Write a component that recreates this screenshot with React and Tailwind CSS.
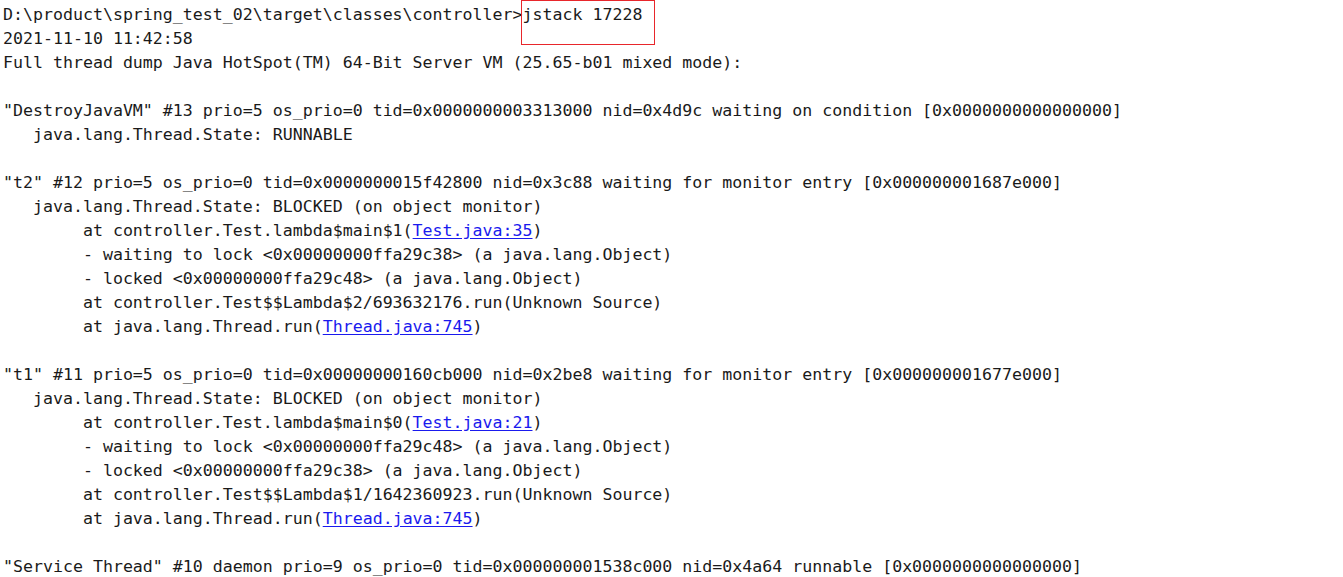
import React from "react";

const L = ({ children }) => <span className="text-[#1a1aee] underline underline-offset-2">{children}</span>;

const lines = [
  ["D:\\product\\spring_test_02\\target\\classes\\controller>jstack 17228"],
  ["2021-11-10 11:42:58"],
  ["Full thread dump Java HotSpot(TM) 64-Bit Server VM (25.65-b01 mixed mode):"],
  [""],
  ['"DestroyJavaVM" #13 prio=5 os_prio=0 tid=0x0000000003313000 nid=0x4d9c waiting on condition [0x0000000000000000]'],
  ["   java.lang.Thread.State: RUNNABLE"],
  [""],
  ['"t2" #12 prio=5 os_prio=0 tid=0x0000000015f42800 nid=0x3c88 waiting for monitor entry [0x000000001687e000]'],
  ["   java.lang.Thread.State: BLOCKED (on object monitor)"],
  ["        at controller.Test.lambda$main$1(", "Test.java:35", ")"],
  ["        - waiting to lock <0x00000000ffa29c38> (a java.lang.Object)"],
  ["        - locked <0x00000000ffa29c48> (a java.lang.Object)"],
  ["        at controller.Test$$Lambda$2/693632176.run(Unknown Source)"],
  ["        at java.lang.Thread.run(", "Thread.java:745", ")"],
  [""],
  ['"t1" #11 prio=5 os_prio=0 tid=0x00000000160cb000 nid=0x2be8 waiting for monitor entry [0x000000001677e000]'],
  ["   java.lang.Thread.State: BLOCKED (on object monitor)"],
  ["        at controller.Test.lambda$main$0(", "Test.java:21", ")"],
  ["        - waiting to lock <0x00000000ffa29c48> (a java.lang.Object)"],
  ["        - locked <0x00000000ffa29c38> (a java.lang.Object)"],
  ["        at controller.Test$$Lambda$1/1642360923.run(Unknown Source)"],
  ["        at java.lang.Thread.run(", "Thread.java:745", ")"],
  [""],
  ['"Service Thread" #10 daemon prio=9 os_prio=0 tid=0x000000001538c000 nid=0x4a64 runnable [0x0000000000000000]'],
];

export default function App() {
  return (
    <div className="w-[1343px] h-[577px] bg-white overflow-hidden relative">
      <div
        className="pl-[3px] pt-[3px] text-[16.6px] leading-[24px] text-[#1a1a1a] whitespace-pre"
        style={{ fontFamily: '"DejaVu Sans Mono", "Liberation Mono", monospace' }}
      >
        {lines.map((l, i) => (
          <div key={i} className="h-[24px]">
            {l.length === 1 ? (
              l[0] || "\u00a0"
            ) : (
              <>
                {l[0]}
                <L>{l[1]}</L>
                {l[2]}
              </>
            )}
          </div>
        ))}
      </div>
      <div className="absolute left-[521px] top-0 w-[134px] h-[45px] border border-[#e8262b]" />
    </div>
  );
}
